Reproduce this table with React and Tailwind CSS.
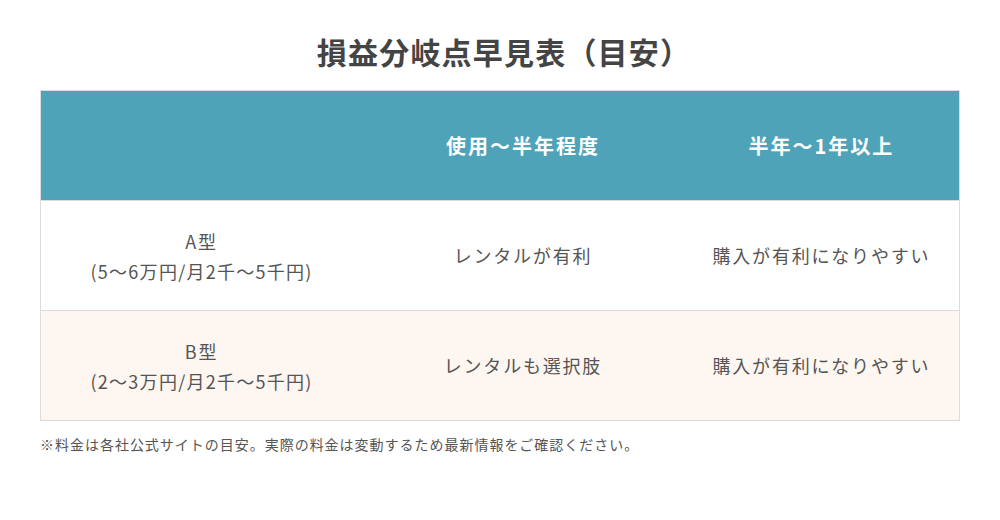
const rows = [
  { type: 'A型', price: '(5〜6万円/月2千〜5千円)', short: 'レンタルが有利', long: '購入が有利になりやすい', bg: 'bg-white' },
  { type: 'B型', price: '(2〜3万円/月2千〜5千円)', short: 'レンタルも選択肢', long: '購入が有利になりやすい', bg: 'bg-[#fdf6f1]' },
];

export default function App() {
  return (
    <div className="w-[1000px] h-[520px] bg-white text-[#555] font-['Noto_Sans_CJK_JP','Noto_Sans',sans-serif] px-10 pt-[31px]">
      <h1 className="text-center text-[30px] leading-[40px] font-bold text-[#444] tracking-[0.04em] pl-[8px]">
        損益分岐点早見表（目安）
      </h1>

      <table className="w-full mt-[19px] border border-[#dcdcdc] border-collapse table-fixed">
        <thead>
          <tr className="bg-[#4fa3b9] text-white h-[110px]">
            <th className="w-[35%]"></th>
            <th className="w-[35%] text-[20px] font-bold tracking-[0.1em]">使用〜半年程度</th>
            <th className="w-[30%] text-[20px] font-bold tracking-[0.1em]">半年〜1年以上</th>
          </tr>
        </thead>
        <tbody>
          {rows.map((r) => (
            <tr key={r.type} className={`${r.bg} h-[110px] border-t border-[#dcdcdc] text-[18px] tracking-[0.1em]`}>
              <td className="text-center leading-[30px]">
                <div>{r.type}</div>
                <div className="tracking-[0.07em]">{r.price}</div>
              </td>
              <td className="text-center">{r.short}</td>
              <td className="text-center">{r.long}</td>
            </tr>
          ))}
        </tbody>
      </table>

      <p className="mt-[13px] text-[14px] tracking-[0.07em] text-[#555]">
        ※料金は各社公式サイトの目安。実際の料金は変動するため最新情報をご確認ください。
      </p>
    </div>
  );
}
